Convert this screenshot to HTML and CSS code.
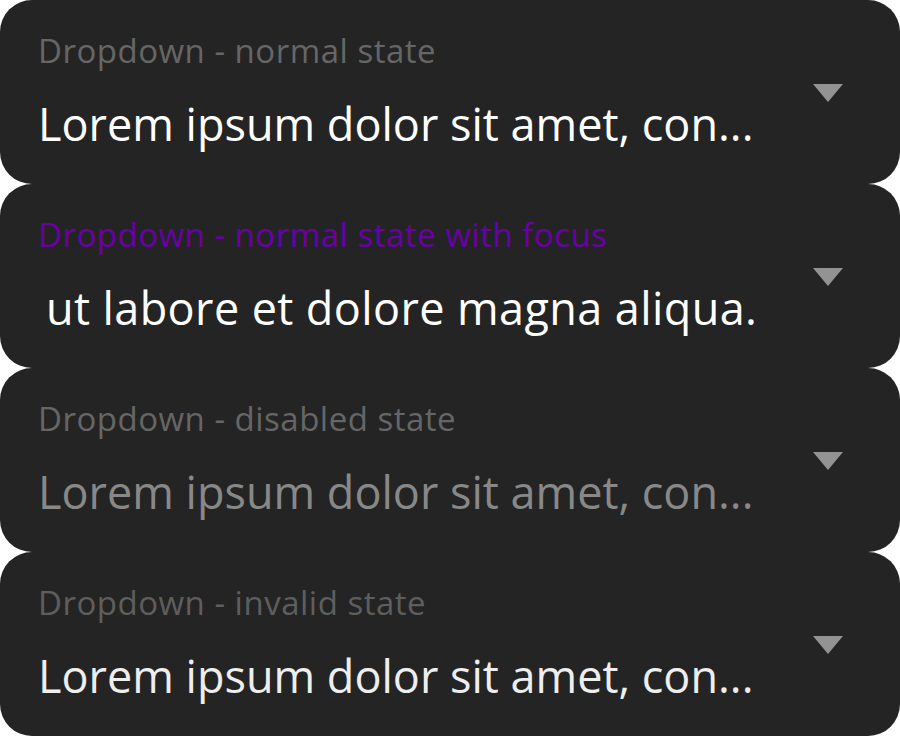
FILE: index.html
```html
<!DOCTYPE html>
<html lang="en">
<head>
<meta charset="utf-8">
<title>Dropdowns</title>
<link rel="stylesheet" href="styles.css">
</head>
<body>
<div class="list">
  <div class="dropdown">
    <div class="fields">
      <div class="label">Dropdown - normal state</div>
      <div class="value">Lorem ipsum dolor sit amet, con...</div>
    </div>
    <svg class="arrow" width="30" height="18" viewBox="0 0 30 18"><polygon points="0,0 30,0 15,18"/></svg>
  </div>
  <div class="dropdown focus">
    <div class="fields">
      <div class="label">Dropdown - normal state with focus</div>
      <div class="value">ut labore et dolore magna aliqua.</div>
    </div>
    <svg class="arrow" width="30" height="18" viewBox="0 0 30 18"><polygon points="0,0 30,0 15,18"/></svg>
  </div>
  <div class="dropdown disabled">
    <div class="fields">
      <div class="label">Dropdown - disabled state</div>
      <div class="value">Lorem ipsum dolor sit amet, con...</div>
    </div>
    <svg class="arrow" width="30" height="18" viewBox="0 0 30 18"><polygon points="0,0 30,0 15,18"/></svg>
  </div>
  <div class="dropdown invalid">
    <div class="fields">
      <div class="label">Dropdown - invalid state</div>
      <div class="value">Lorem ipsum dolor sit amet, con...</div>
    </div>
    <svg class="arrow" width="30" height="18" viewBox="0 0 30 18"><polygon points="0,0 30,0 15,18"/></svg>
  </div>
</div>
</body>
</html>
```
FILE: styles.css
```css
html, body {
  margin: 0;
  padding: 0;
  background: #ffffff;
}
body {
  font-family: "Open Sans", "Noto Sans", sans-serif;
}
.list {
  display: flex;
  flex-direction: column;
  width: 900px;
}
.dropdown {
  box-sizing: border-box;
  height: 184px;
  background: #242424;
  border-radius: 32px;
  display: flex;
  align-items: flex-start;
  padding: 31px 57px 0 38px;
}
.fields {
  flex: 1;
  display: flex;
  flex-direction: column;
  gap: 25px;
  min-width: 0;
}
.label {
  font-size: 33px;
  line-height: 40px;
  letter-spacing: 0.5px;
  color: #666666;
  white-space: nowrap;
}
.value {
  font-size: 45px;
  line-height: 56px;
  color: #ffffff;
  white-space: nowrap;
}
.arrow {
  margin-top: 53px;
  fill: #939393;
  flex: none;
}
.focus .label {
  color: #6a00a8;
}
.focus .value {
  padding-left: 8px;
  letter-spacing: 0.4px;
}
.disabled .value {
  color: #888888;
}
.invalid .label {
  color: #5e5e5e;
}
.invalid .value {
  color: #eeeeee;
}
```
